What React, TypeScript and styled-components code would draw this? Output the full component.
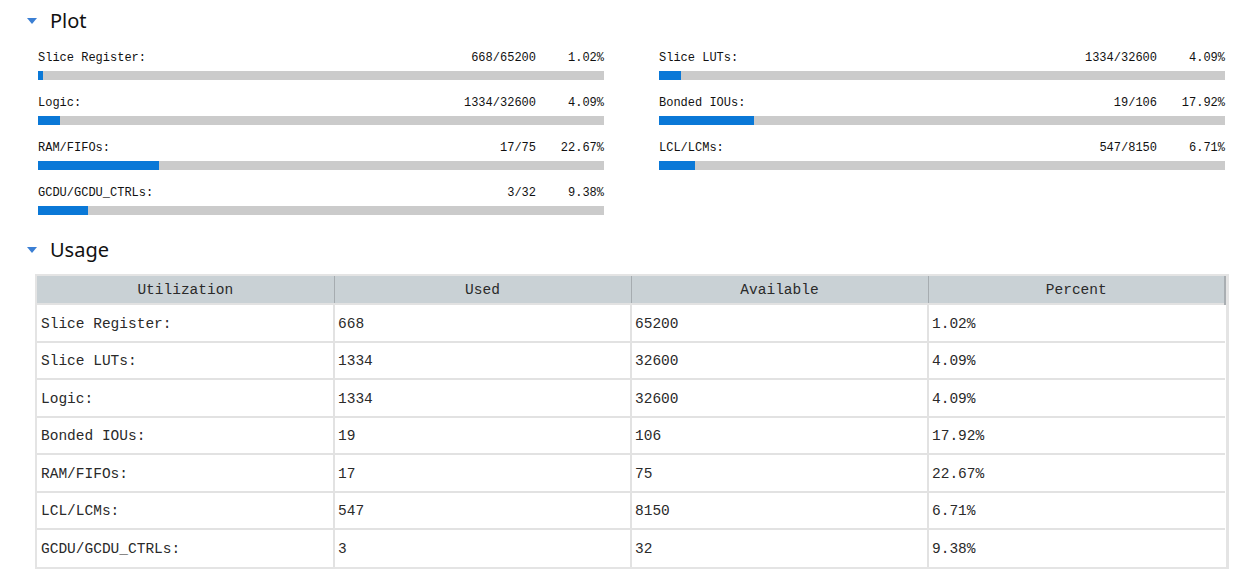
import React from "react";
import styled, { createGlobalStyle } from "styled-components";

const Global = createGlobalStyle`
  html, body { margin: 0; padding: 0; background: #fff; }
  body { font-family: "Liberation Mono", monospace; color: #222; }
`;

const Page = styled.div`
  width: 1236px;
  padding: 6px 0 0 0;
  box-sizing: border-box;
`;

const SectionHead = styled.div`
  display: flex;
  align-items: center;
  height: 28px;
  padding-left: 27px;
  gap: 13px;
  font-family: "Noto Sans", "Open Sans", sans-serif;
  font-size: 20px;
  color: #111;
`;

const Caret = styled.span`
  width: 0;
  height: 0;
  border-left: 5.5px solid transparent;
  border-right: 5.5px solid transparent;
  border-top: 6px solid #3b7fd4;
  margin-top: 1px;
`;

const PlotGrid = styled.div`
  display: grid;
  grid-template-columns: 566px 566px;
  column-gap: 55px;
  padding: 14px 0 0 38px;
`;

const PlotItem = styled.div`
  display: flex;
  flex-direction: column;
  height: 45px;
`;

const PlotLine = styled.div`
  display: flex;
  align-items: center;
  height: 16px;
  margin-top: 2px;
  font-size: 12px;
  font-family: "Liberation Mono", "DejaVu Sans Mono", monospace;
  color: #111;
`;

const PlotLabel = styled.span`
  flex: 1;
`;

const PlotCount = styled.span`
  text-align: right;
`;

const PlotPct = styled.span`
  width: 68px;
  text-align: right;
`;

const Track = styled.div`
  margin-top: 5px;
  height: 9px;
  background: #cbcbcb;
  display: flex;
`;

const Fill = styled.div`
  background: #0a78d7;
  height: 100%;
`;

const UsageHead = styled(SectionHead)`
  margin-top: 7px;
`;

const TableWrap = styled.div`
  margin: 11px 0 0 35px;
  width: 1194px;
  border: 2px solid #e4e4e4;
  border-right-width: 3px;
  box-sizing: border-box;
`;

const Table = styled.table`
  width: 100%;
  border-collapse: collapse;
  table-layout: fixed;
  font-family: "Liberation Mono", "Courier New", monospace;
  font-size: 14.5px;
  color: #2a2a2a;
`;

const Th = styled.th`
  height: 27px;
  padding: 0;
  background: #c9d1d5;
  font-weight: normal;
  text-align: center;
  border-left: 1px solid #a6acb0;
  &:first-child { border-left: none; }
  &:last-child { border-right: 2px solid #a9aeb2; }
`;

const Td = styled.td`
  height: 37.5px;
  padding: 2px 0 0 3px;
  border-top: 2px solid #e2e2e2;
  border-left: 2px solid #e2e2e2;
  &:first-child { border-left: none; padding-left: 4px; }
  box-sizing: border-box;
`;

type Item = { label: string; used: number; total: number; pct: string };

const plotLeft: Item[] = [
  { label: "Slice Register:", used: 668, total: 65200, pct: "1.02%" },
  { label: "Logic:", used: 1334, total: 32600, pct: "4.09%" },
  { label: "RAM/FIFOs:", used: 17, total: 75, pct: "22.67%" },
  { label: "GCDU/GCDU_CTRLs:", used: 3, total: 32, pct: "9.38%" },
];
const plotRight: Item[] = [
  { label: "Slice LUTs:", used: 1334, total: 32600, pct: "4.09%" },
  { label: "Bonded IOUs:", used: 19, total: 106, pct: "17.92%" },
  { label: "LCL/LCMs:", used: 547, total: 8150, pct: "6.71%" },
];

const rows: Item[] = [
  { label: "Slice Register:", used: 668, total: 65200, pct: "1.02%" },
  { label: "Slice LUTs:", used: 1334, total: 32600, pct: "4.09%" },
  { label: "Logic:", used: 1334, total: 32600, pct: "4.09%" },
  { label: "Bonded IOUs:", used: 19, total: 106, pct: "17.92%" },
  { label: "RAM/FIFOs:", used: 17, total: 75, pct: "22.67%" },
  { label: "LCL/LCMs:", used: 547, total: 8150, pct: "6.71%" },
  { label: "GCDU/GCDU_CTRLs:", used: 3, total: 32, pct: "9.38%" },
];

const PlotBar = ({ it }: { it: Item }) => {
  const p = Math.max((it.used / it.total) * 100 * 0.94, 0.9);
  return (
    <PlotItem>
      <PlotLine>
        <PlotLabel>{it.label}</PlotLabel>
        <PlotCount>
          {it.used}/{it.total}
        </PlotCount>
        <PlotPct>{it.pct}</PlotPct>
      </PlotLine>
      <Track>
        <Fill style={{ width: `${p}%` }} />
      </Track>
    </PlotItem>
  );
};

const Column = styled.div`
  display: flex;
  flex-direction: column;
`;

export default function App() {
  return (
    <Page>
      <Global />
      <SectionHead>
        <Caret />
        Plot
      </SectionHead>
      <PlotGrid>
        <Column>
          {plotLeft.map((it) => (
            <PlotBar key={it.label} it={it} />
          ))}
        </Column>
        <Column>
          {plotRight.map((it) => (
            <PlotBar key={it.label} it={it} />
          ))}
        </Column>
      </PlotGrid>
      <UsageHead>
        <Caret />
        Usage
      </UsageHead>
      <TableWrap>
        <Table>
          <thead>
            <tr>
              <Th>Utilization</Th>
              <Th>Used</Th>
              <Th>Available</Th>
              <Th>Percent</Th>
            </tr>
          </thead>
          <tbody>
            {rows.map((r) => (
              <tr key={r.label}>
                <Td>{r.label}</Td>
                <Td>{r.used}</Td>
                <Td>{r.total}</Td>
                <Td>{r.pct}</Td>
              </tr>
            ))}
          </tbody>
        </Table>
      </TableWrap>
    </Page>
  );
}
